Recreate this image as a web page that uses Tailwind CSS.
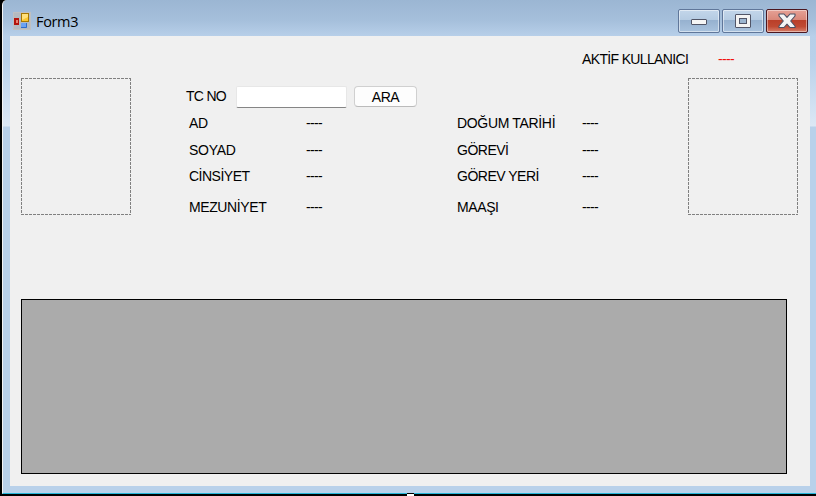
<!DOCTYPE html>
<html lang="tr">
<head>
<meta charset="utf-8">
<title>Form3</title>
<script src="https://cdn.jsdelivr.net/npm/@tailwindcss/browser@4"></script>
</head>
<body class="w-[816px] h-[496px] overflow-hidden bg-black font-['Liberation_Sans',Arial,sans-serif] text-[14px] leading-[16px] text-black">
<div class="relative h-full pl-[2px]">
  <div class="flex h-[494px] flex-col rounded-tl-[5px] border-l border-l-[#f4f4f4] border-b border-b-[#25b5d8] bg-[linear-gradient(to_bottom,#9bb6d3_0px,#a5bfdb_20px,#b7cfe9_36px,#b9d1ea_60px,#dce8f5_126px,#b9d1ea_127px)]">
    <header class="flex h-[36px] shrink-0 items-start justify-between">
      <div class="flex items-start pt-[12px] pl-[10px]">
        <svg width="18" height="18" viewBox="0 0 18 18">
          <rect x=".5" y=".5" width="17" height="17" fill="#b4bac0" stroke="#bfc0c1"/>
          <rect x="1" y="6" width="5" height="7" fill="#b3130b"/><rect x="3" y="8" width="2" height="3" fill="#e8806f"/>
          <rect x="8.5" y="1.5" width="7" height="8" fill="#fcc62e" stroke="#a77700"/><path d="M9 2h6v3l-6 3z" fill="#ffe07a"/>
          <rect x="8" y="11" width="6" height="5" fill="#6ba2f2"/><path d="M8 15.5h5.5V11" fill="none" stroke="#2f6cc9"/>
        </svg>
        <h1 class="pl-[5px] font-['Open_Sans',sans-serif] text-[14.5px] leading-[19px] tracking-[-0.35px]">Form3</h1>
      </div>
      <div class="flex gap-[2px] pt-[9px] pr-[8px]">
        <button class="flex h-[24px] w-[42px] items-center justify-center rounded-[2px] border border-[#60779a] bg-[linear-gradient(#c3d6ea_0%,#b5cbe2_45%,#96b1cf_46%,#a9c3de_100%)] shadow-[inset_0_0_0_1px_#ffffff80]" aria-label="Küçült">
          <svg class="relative top-px" width="18" height="8" viewBox="0 0 18 8"><rect x="1.5" y="1.5" width="15" height="5" rx=".5" fill="#f5f5f5" stroke="#515567"/></svg>
        </button>
        <button class="flex h-[24px] w-[42px] items-center justify-center rounded-[2px] border border-[#60779a] bg-[linear-gradient(#c3d6ea_0%,#b5cbe2_45%,#96b1cf_46%,#a9c3de_100%)] shadow-[inset_0_0_0_1px_#ffffff80]" aria-label="Ekranı kapla">
          <svg width="18" height="16" viewBox="0 0 18 16"><rect x="1.5" y="1.5" width="15" height="13" rx=".5" fill="#f3f3f3" stroke="#515567"/><rect x="5.5" y="5.5" width="7" height="5" fill="#9bb5d0" stroke="#515567"/></svg>
        </button>
        <button class="flex h-[24px] w-[42px] items-center justify-center rounded-[2px] border border-[#4b1720] bg-[linear-gradient(#e5a196_0%,#d98779_44%,#b93e28_45%,#c04a33_75%,#d7806b_100%)] shadow-[inset_0_0_0_1px_#ffffff70]" aria-label="Kapat">
          <svg width="20" height="18" viewBox="0 0 20 18"><path d="M2 2h5l3 3.3L13 2h5v2l-4.3 5 4.3 5v1.5h-5l-3-3.3-3 3.3H2V14l4.3-5L2 4z" fill="#f4f4f4" stroke="#4c5063" stroke-width="1.1" stroke-linejoin="round"/></svg>
        </button>
      </div>
    </header>
    <main class="ml-[7px] h-[450px] w-[800px] shrink-0 bg-[#f0f0f0]">
      <div class="flex h-[42px] pt-[15px] pl-[572px]">
        <span class="w-[136px] whitespace-nowrap tracking-[-0.65px]">AKTİF KULLANICI</span><span class="tracking-[-0.66px] text-[#f01010]">----</span>
      </div>
      <div class="flex h-[221px] items-start pl-[11px]">
        <svg width="110" height="137" fill="none" stroke="#808080" stroke-dasharray="3 1"><path d="M0 .5H110M0 136.5H110M.5 0V137M109.5 0V137"/></svg>
        <section class="w-[557px] pl-[55px]">
          <form class="flex h-[37px] items-start pt-[8px]">
            <label for="tc" class="w-[50px] pt-[2px] tracking-[-0.7px]">TC NO</label>
            <input id="tc" class="h-[22px] w-[111px] rounded-[2px] border border-[#e7e7e7] border-b-[#858585] bg-white px-1 outline-none">
            <button type="button" class="ml-[7px] h-[21px] w-[63px] rounded-[4px] border border-[#d0d0d0] border-b-[#bbb] bg-[#fdfdfd] pt-px leading-[19px] tracking-[-0.4px]">ARA</button>
          </form>
          <div class="grid grid-cols-[117px_151px_125px_60px] grid-rows-[27px_26px_31px_20px] pl-[3px] tracking-[-0.4px] whitespace-nowrap">
            <span>AD</span><span class="tracking-[-0.66px]">----</span><span class="tracking-[-0.33px]">DOĞUM TARİHİ</span><span class="tracking-[-0.66px]">----</span>
            <span class="tracking-[-0.25px]">SOYAD</span><span class="tracking-[-0.66px]">----</span><span class="tracking-[-0.5px]">GÖREVİ</span><span class="tracking-[-0.66px]">----</span>
            <span class="tracking-[-0.5px]">CİNSİYET</span><span class="tracking-[-0.66px]">----</span><span class="tracking-[-0.5px]">GÖREV YERİ</span><span class="tracking-[-0.66px]">----</span>
            <span>MEZUNİYET</span><span class="tracking-[-0.66px]">----</span><span>MAAŞI</span><span class="tracking-[-0.66px]">----</span>
          </div>
        </section>
        <svg width="110" height="137" fill="none" stroke="#808080" stroke-dasharray="3 1"><path d="M0 .5H110M0 136.5H110M.5 0V137M109.5 0V137"/></svg>
      </div>
      <div class="ml-[11px] h-[175px] w-[766px] border border-black bg-[#ababab]"></div>
    </main>
  </div>
  <div class="absolute bottom-0 left-[407px] h-[3px] w-[7px] border-t border-black bg-white"></div>
</div>
</body>
</html>
